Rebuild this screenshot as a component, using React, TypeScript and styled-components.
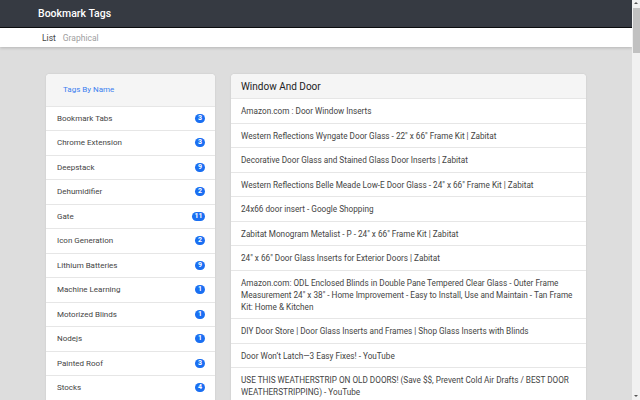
import React from "react";
import styled, { createGlobalStyle } from "styled-components";

const Global = createGlobalStyle`
  html, body { margin: 0; padding: 0; height: 100%; overflow: hidden; }
  body { font-family: Roboto, "Liberation Sans", Arial, sans-serif; background: #dddddd; }
  * { box-sizing: border-box; }
`;

const Shell = styled.div`
  display: flex;
  width: 640px;
  height: 400px;
  overflow: hidden;
`;

const Main = styled.div`
  flex: 1;
  display: flex;
  flex-direction: column;
  background: #dddddd;
  overflow: hidden;
`;

const TopBar = styled.header`
  height: 28px;
  flex-shrink: 0;
  background: #363a42;
  border-bottom: 1px solid #0d0e10;
  display: flex;
  align-items: center;
  padding-left: 38px;
`;

const Title = styled.h1`
  margin: 0;
  font-size: 10.5px;
  font-weight: 500;
  color: #ffffff;
`;

const NavBar = styled.nav`
  height: 19px;
  flex-shrink: 0;
  background: #ffffff;
  display: flex;
  align-items: center;
  gap: 7px;
  padding-left: 42px;
  box-shadow: 0 1px 3px rgba(0, 0, 0, 0.18);
  position: relative;
  z-index: 1;
`;

const NavItem = styled.span<{ $active?: boolean }>`
  font-size: 8.5px;
  color: ${(p) => (p.$active ? "#444444" : "#a0a0a0")};
`;

const Content = styled.div`
  display: flex;
  align-items: flex-start;
  gap: 16px;
  padding: 27px 46px 0 46px;
`;

const Card = styled.section<{ $width: number }>`
  width: ${(p) => p.$width}px;
  flex-shrink: 0;
  background: #ffffff;
  border-radius: 4px;
  box-shadow: 0 0 2px rgba(0, 0, 0, 0.12);
  overflow: hidden;
`;

const TagsHeader = styled.div`
  height: 31.5px;
  background: #f5f5f5;
  display: flex;
  align-items: center;
  padding-left: 17px;
  font-size: 8px;
  color: #3c7ff0;
`;

const TagRow = styled.div`
  height: 24.5px;
  border-top: 1px solid #e6e6e6;
  display: flex;
  align-items: center;
  justify-content: space-between;
  padding: 0 10px 0 11px;
  font-size: 8px;
  color: #444444;
`;

const Badge = styled.span<{ $wide?: boolean }>`
  min-width: 10px;
  height: 9px;
  padding: 0 ${(p) => (p.$wide ? "2.5px" : "0")};
  border-radius: 5px;
  background: #1a6ff2;
  color: #ffffff;
  font-size: 7px;
  font-weight: 700;
  line-height: 9px;
  text-align: center;
`;

const LinksHeader = styled.div`
  height: 24px;
  background: #f5f5f5;
  display: flex;
  align-items: center;
  padding-left: 10px;
  font-size: 10px;
  color: #222222;
`;

const LinkRow = styled.div`
  border-top: 1px solid #e6e6e6;
  padding: 6px 10px 5.5px 10px;
  font-size: 8.2px;
  line-height: 12px;
  color: #444444;
`;

const ScrollTrack = styled.div`
  width: 8px;
  flex-shrink: 0;
  background: #f1f1f1;
  display: flex;
  flex-direction: column;
  align-items: center;
  padding-top: 2px;
`;

const Arrow = styled.div<{ $down?: boolean }>`
  width: 0;
  height: 0;
  border-left: 2px solid transparent;
  border-right: 2px solid transparent;
  ${(p) => (p.$down ? "border-top: 2px solid #555;" : "border-bottom: 2px solid #555;")}
`;

const Thumb = styled.div`
  width: 7px;
  height: 45px;
  margin-top: 4px;
  background: #c1c1c1;
`;

const Spacer = styled.div`
  flex: 1;
`;

const ArrowBottom = styled.div`
  padding-bottom: 3px;
`;

const tags: [string, number][] = [
  ["Bookmark Tabs", 3],
  ["Chrome Extension", 3],
  ["Deepstack", 9],
  ["Dehumidifier", 2],
  ["Gate", 11],
  ["Icon Generation", 2],
  ["Lithium Batteries", 9],
  ["Machine Learning", 1],
  ["Motorized Blinds", 1],
  ["Nodejs", 1],
  ["Painted Roof", 3],
  ["Stocks", 4],
  ["Window And Door", 14],
];

const links = [
  "Amazon.com : Door Window Inserts",
  "Western Reflections Wyngate Door Glass - 22\" x 66\" Frame Kit | Zabitat",
  "Decorative Door Glass and Stained Glass Door Inserts | Zabitat",
  "Western Reflections Belle Meade Low-E Door Glass - 24\" x 66\" Frame Kit | Zabitat",
  "24x66 door insert - Google Shopping",
  "Zabitat Monogram Metalist - P - 24\" x 66\" Frame Kit | Zabitat",
  "24\" x 66\" Door Glass Inserts for Exterior Doors | Zabitat",
  "Amazon.com: ODL Enclosed Blinds in Double Pane Tempered Clear Glass - Outer Frame Measurement 24\" x 38\" - Home Improvement - Easy to Install, Use and Maintain - Tan Frame Kit: Home & Kitchen",
  "DIY Door Store | Door Glass Inserts and Frames | Shop Glass Inserts with Blinds",
  "Door Won’t Latch—3 Easy Fixes! - YouTube",
  "USE THIS WEATHERSTRIP ON OLD DOORS! (Save $$, Prevent Cold Air Drafts / BEST DOOR WEATHERSTRIPPING) - YouTube",
  "Exterior Door Glass Inserts - The Home Depot",
];

export default function App() {
  return (
    <>
      <Global />
      <Shell>
        <Main>
          <TopBar>
            <Title>Bookmark Tags</Title>
          </TopBar>
          <NavBar>
            <NavItem $active>List</NavItem>
            <NavItem>Graphical</NavItem>
          </NavBar>
          <Content>
            <Card $width={169}>
              <TagsHeader>Tags By Name</TagsHeader>
              {tags.map(([name, count]) => (
                <TagRow key={name}>
                  <span>{name}</span>
                  <Badge $wide={count > 9}>{count}</Badge>
                </TagRow>
              ))}
            </Card>
            <Card $width={355}>
              <LinksHeader>Window And Door</LinksHeader>
              {links.map((l) => (
                <LinkRow key={l}>{l}</LinkRow>
              ))}
            </Card>
          </Content>
        </Main>
        <ScrollTrack>
          <Arrow />
          <Thumb />
          <Spacer />
          <ArrowBottom>
            <Arrow $down />
          </ArrowBottom>
        </ScrollTrack>
      </Shell>
    </>
  );
}
